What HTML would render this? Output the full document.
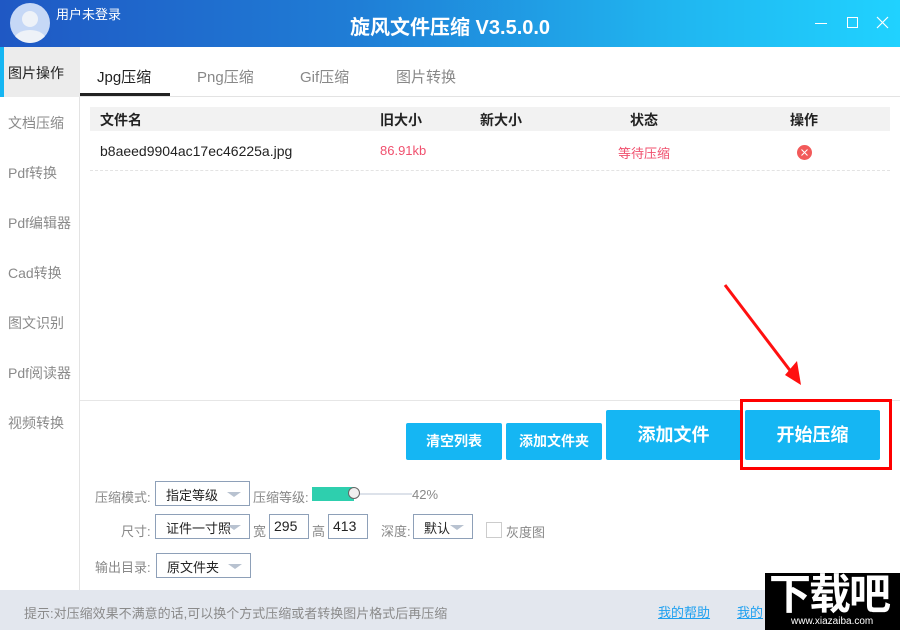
<!DOCTYPE html>
<html><head><meta charset="utf-8"><style>
*{margin:0;padding:0;box-sizing:border-box}
body{width:900px;height:630px;position:relative;overflow:hidden;background:#fff;font-family:"Liberation Sans","Noto Sans CJK SC",sans-serif;font-size:13px;color:#222}
.a{position:absolute}
.title{left:0;top:0;width:900px;height:47px;background:linear-gradient(90deg,#1f58c4 0%,#1f7ed6 40%,#20b6f0 75%,#20d2ff 100%)}
.side{left:0;top:47px;width:80px;height:543px;border-right:1px solid #e3e3e3;background:#fff}
.si{position:absolute;left:8px;font-size:14px;color:#8a8a8a}
.btn{position:absolute;background:#15b6f3;color:#fff;font-weight:bold;text-align:center;border-radius:2px}
.lbl{position:absolute;font-size:13px;color:#888}
.sel{position:absolute;border:1px solid #8ea0b8;height:25px;font-size:13px;color:#222;padding:3px 0 0 10px;background:#fff}
.sel:after{content:"";position:absolute;right:8px;top:10px;border-left:7px solid transparent;border-right:7px solid transparent;border-top:5px solid #b8c2d0}
.inp{position:absolute;border:1px solid #8ea0b8;height:25px;font-size:14px;padding:3px 0 0 4px}
</style></head><body>
<div class="a title"></div>
<div class="a" style="left:10px;top:3px;width:40px;height:40px;border-radius:50%;background:#c6d8f6;overflow:hidden"><div class="a" style="left:12px;top:8px;width:16px;height:16px;border-radius:50%;background:#eef2f8"></div><div class="a" style="left:4px;top:27px;width:32px;height:20px;border-radius:50%;background:#eef2f8"></div></div>
<div class="a" style="left:56px;top:4px;color:#fff;font-size:13px">用户未登录</div>
<div class="a" style="left:350px;top:11px;color:#fff;font-size:20px;font-weight:bold">旋风文件压缩 V3.5.0.0</div>
<div class="a" style="left:815px;top:23px;width:12px;height:1px;background:#fff"></div>
<div class="a" style="left:847px;top:17px;width:11px;height:11px;border:1px solid #fff"></div>
<svg class="a" style="left:876px;top:16px" width="13" height="13"><path d="M1 1L12 12M12 1L1 12" stroke="#fff" stroke-width="1.2"/></svg>
<div class="a side"></div>
<div class="a" style="left:0;top:47px;width:80px;height:50px;background:#ececec"></div>
<div class="a" style="left:0;top:47px;width:4px;height:50px;background:#15b6f3"></div>
<div class="si" style="top:63px;color:#222">图片操作</div>
<div class="si" style="top:113px">文档压缩</div>
<div class="si" style="top:163px">Pdf转换</div>
<div class="si" style="top:213px">Pdf编辑器</div>
<div class="si" style="top:263px">Cad转换</div>
<div class="si" style="top:313px">图文识别</div>
<div class="si" style="top:363px">Pdf阅读器</div>
<div class="si" style="top:413px">视频转换</div>
<div class="a" style="left:97px;top:66px;font-size:15px;color:#222">Jpg压缩</div>
<div class="a" style="left:197px;top:66px;font-size:15px;color:#888">Png压缩</div>
<div class="a" style="left:300px;top:66px;font-size:15px;color:#888">Gif压缩</div>
<div class="a" style="left:396px;top:66px;font-size:15px;color:#888">图片转换</div>
<div class="a" style="left:80px;top:96px;width:820px;height:1px;background:#e3e3e3"></div>
<div class="a" style="left:80px;top:93px;width:90px;height:3px;background:#222"></div>
<div class="a" style="left:90px;top:107px;width:800px;height:24px;background:#f2f2f2"></div>
<div class="a" style="top:110px;left:100px;font-weight:bold;font-size:14px">文件名</div>
<div class="a" style="top:110px;left:380px;font-weight:bold;font-size:14px">旧大小</div>
<div class="a" style="top:110px;left:480px;font-weight:bold;font-size:14px">新大小</div>
<div class="a" style="top:110px;left:630px;font-weight:bold;font-size:14px">状态</div>
<div class="a" style="top:110px;left:790px;font-weight:bold;font-size:14px">操作</div>
<div class="a" style="top:143px;left:100px;font-size:14px">b8aeed9904ac17ec46225a.jpg</div>
<div class="a" style="top:143px;left:380px;font-size:13px;color:#f0506e">86.91kb</div>
<div class="a" style="top:143px;left:618px;font-size:13px;color:#f0506e">等待压缩</div>
<div class="a" style="left:797px;top:145px;width:15px;height:15px;border-radius:50%;background:#f25a5a"></div>
<svg class="a" style="left:797px;top:145px" width="15" height="15"><path d="M4.5 4.5L10.5 10.5M10.5 4.5L4.5 10.5" stroke="#fff" stroke-width="1"/></svg>
<div class="a" style="left:90px;top:170px;width:800px;border-top:1px dashed #e3e3e3"></div>
<div class="a" style="left:80px;top:400px;width:820px;height:1px;background:#e6e6e6"></div>
<svg class="a" style="left:715px;top:275px" width="100" height="120"><path d="M10 10L80 102" stroke="#ff1010" stroke-width="3"/><path d="M70 100L86 110L82 86Z" fill="#ff1010"/></svg>
<div class="btn" style="left:406px;top:423px;width:96px;height:37px;line-height:37px;font-size:14px">清空列表</div>
<div class="btn" style="left:506px;top:423px;width:96px;height:37px;line-height:37px;font-size:14px">添加文件夹</div>
<div class="btn" style="left:606px;top:410px;width:135px;height:50px;line-height:50px;font-size:18px">添加文件</div>
<div class="btn" style="left:745px;top:410px;width:135px;height:50px;line-height:50px;font-size:18px">开始压缩</div>
<div class="a" style="left:740px;top:399px;width:152px;height:71px;border:3px solid #f00"></div>
<div class="lbl" style="left:95px;top:487px">压缩模式:</div>
<div class="sel" style="left:155px;top:481px;width:95px">指定等级</div>
<div class="lbl" style="left:253px;top:487px">压缩等级:</div>
<div class="a" style="left:312px;top:487px;width:42px;height:14px;background:#2ecfae"></div>
<div class="a" style="left:354px;top:493px;width:58px;height:2px;background:#dde2ea"></div>
<div class="a" style="left:348px;top:487px;width:12px;height:12px;border-radius:50%;background:#f0f0f0;border:1px solid #666"></div>
<div class="lbl" style="left:412px;top:487px">42%</div>
<div class="lbl" style="left:121px;top:521px">尺寸:</div>
<div class="sel" style="left:155px;top:514px;width:95px">证件一寸照</div>
<div class="lbl" style="left:253px;top:521px">宽</div>
<div class="inp" style="left:269px;top:514px;width:40px">295</div>
<div class="lbl" style="left:312px;top:521px">高</div>
<div class="inp" style="left:328px;top:514px;width:40px">413</div>
<div class="lbl" style="left:381px;top:521px">深度:</div>
<div class="sel" style="left:413px;top:514px;width:60px">默认</div>
<div class="a" style="left:486px;top:522px;width:16px;height:16px;border:1px solid #ccc"></div>
<div class="lbl" style="left:506px;top:522px">灰度图</div>
<div class="lbl" style="left:95px;top:557px">输出目录:</div>
<div class="sel" style="left:156px;top:553px;width:95px">原文件夹</div>
<div class="a" style="left:0;top:590px;width:900px;height:40px;background:#e3e7ee"></div>
<div class="a" style="left:24px;top:603px;font-size:13px;color:#8a8a8a">提示:对压缩效果不满意的话,可以换个方式压缩或者转换图片格式后再压缩</div>
<div class="a" style="left:658px;top:602px;font-size:13px;color:#1ea0f0;text-decoration:underline">我的帮助</div>
<div class="a" style="left:737px;top:602px;font-size:13px;color:#1ea0f0;text-decoration:underline">我的</div>
<div class="a" style="left:765px;top:573px;width:135px;height:57px;background:#000;overflow:hidden">
<div class="a" style="left:4px;top:-2px;color:#fff;font-size:42px;font-weight:bold;letter-spacing:-2px;line-height:48px">下载吧</div>
<div class="a" style="left:26px;top:43px;color:#fff;font-size:10px">www.xiazaiba.com</div>
</div>
</body></html>
